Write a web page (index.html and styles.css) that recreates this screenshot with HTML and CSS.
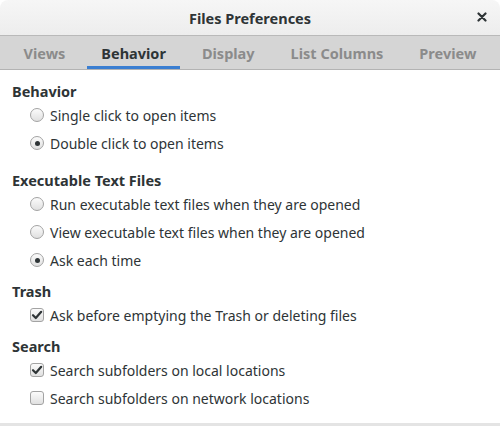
FILE: index.html
```html
<!DOCTYPE html>
<html>
<head>
<meta charset="utf-8">
<link rel="stylesheet" href="styles.css">
</head>
<body>
<div class="window">
  <header class="titlebar">
    <span class="title">Files Preferences</span>
    <span class="close">
      <svg width="10" height="10" viewBox="0 0 10 10"><path d="M1.5 1.5 L8.5 8.5 M8.5 1.5 L1.5 8.5" stroke="#2e3436" stroke-width="2.2" stroke-linecap="round"/></svg>
    </span>
  </header>
  <nav class="tabs">
    <span class="tab">Views</span>
    <span class="tab active">Behavior</span>
    <span class="tab">Display</span>
    <span class="tab">List Columns</span>
    <span class="tab">Preview</span>
  </nav>
  <main class="content">
    <section class="group first">
      <h2 class="heading">Behavior</h2>
      <label class="row"><span class="radio"></span>Single click to open items</label>
      <label class="row"><span class="radio on"></span>Double click to open items</label>
    </section>
    <section class="group">
      <h2 class="heading">Executable Text Files</h2>
      <label class="row"><span class="radio"></span>Run executable text files when they are opened</label>
      <label class="row"><span class="radio"></span>View executable text files when they are opened</label>
      <label class="row"><span class="radio on"></span>Ask each time</label>
    </section>
    <section class="group">
      <h2 class="heading">Trash</h2>
      <label class="row"><span class="check on"><svg width="12" height="12" viewBox="0 0 12 12"><path d="M2 6.2 L4.8 9 L10.2 2.8" fill="none" stroke="#2e3436" stroke-width="2.2" stroke-linecap="round" stroke-linejoin="round"/></svg></span>Ask before emptying the Trash or deleting files</label>
    </section>
    <section class="group">
      <h2 class="heading">Search</h2>
      <label class="row"><span class="check on"><svg width="12" height="12" viewBox="0 0 12 12"><path d="M2 6.2 L4.8 9 L10.2 2.8" fill="none" stroke="#2e3436" stroke-width="2.2" stroke-linecap="round" stroke-linejoin="round"/></svg></span>Search subfolders on local locations</label>
      <label class="row"><span class="check"></span>Search subfolders on network locations</label>
    </section>
  </main>
  <footer class="bottom"></footer>
</div>
</body>
</html>
```
FILE: styles.css
```css
html, body {
  margin: 0;
  padding: 0;
  background: #ffffff;
}
body {
  font-family: "Noto Sans", "Open Sans", sans-serif;
  font-size: 14px;
  color: #2e3436;
}
.window {
  width: 500px;
  height: 426px;
  display: flex;
  flex-direction: column;
  overflow: hidden;
  background: #ffffff;
}
.titlebar {
  height: 35px;
  flex: none;
  display: flex;
  align-items: center;
  justify-content: center;
  position: relative;
  background: linear-gradient(#f6f6f6, #ededed);
  border-bottom: 1px solid #b9b9b9;
  border-radius: 8px 8px 0 0;
}
.title {
  font-weight: bold;
  font-size: 14.5px;
  color: #2e3436;
}
.close {
  position: absolute;
  right: 13px;
  top: 12px;
  display: flex;
}
.tabs {
  height: 33px;
  flex: none;
  display: flex;
  gap: 7px;
  padding-left: 9px;
  background: #d5d5d5;
  border-bottom: 1px solid #b3b3b3;
}
.tab {
  padding: 0 14.5px;
  padding-top: 3px;
  display: flex;
  align-items: center;
  white-space: nowrap;
  font-weight: bold;
  font-size: 14.5px;
  color: #8b8b8b;
  border-bottom: 3px solid transparent;
}
.tab.active {
  color: #2e3436;
  border-bottom-color: #3a7ed1;
}
.content {
  flex: 1;
  padding: 11px 0 0 12px;
}
.group {
  margin-top: 7px;
}
.group.first {
  margin-top: 0;
  padding-bottom: 6px;
}
.heading {
  margin: 0;
  height: 20px;
  line-height: 20px;
  font-size: 14.5px;
  font-weight: bold;
}
.row {
  height: 28px;
  display: flex;
  align-items: center;
  gap: 6px;
  padding-left: 18px;
}
.radio {
  width: 14px;
  height: 14px;
  box-sizing: border-box;
  border-radius: 50%;
  border: 1px solid #a3a3a3;
  background: linear-gradient(#fbfbfb, #e0e0e0);
  display: flex;
  align-items: center;
  justify-content: center;
  flex: none;
}
.radio.on::after {
  content: "";
  width: 5px;
  height: 5px;
  border-radius: 50%;
  background: #2e3436;
}
.check {
  width: 14px;
  height: 14px;
  box-sizing: border-box;
  border-radius: 3px;
  border: 1px solid #a3a3a3;
  background: linear-gradient(#fbfbfb, #e0e0e0);
  display: flex;
  align-items: center;
  justify-content: center;
  flex: none;
}
.bottom {
  height: 3px;
  flex: none;
  background: #e4e4e4;
}
```
